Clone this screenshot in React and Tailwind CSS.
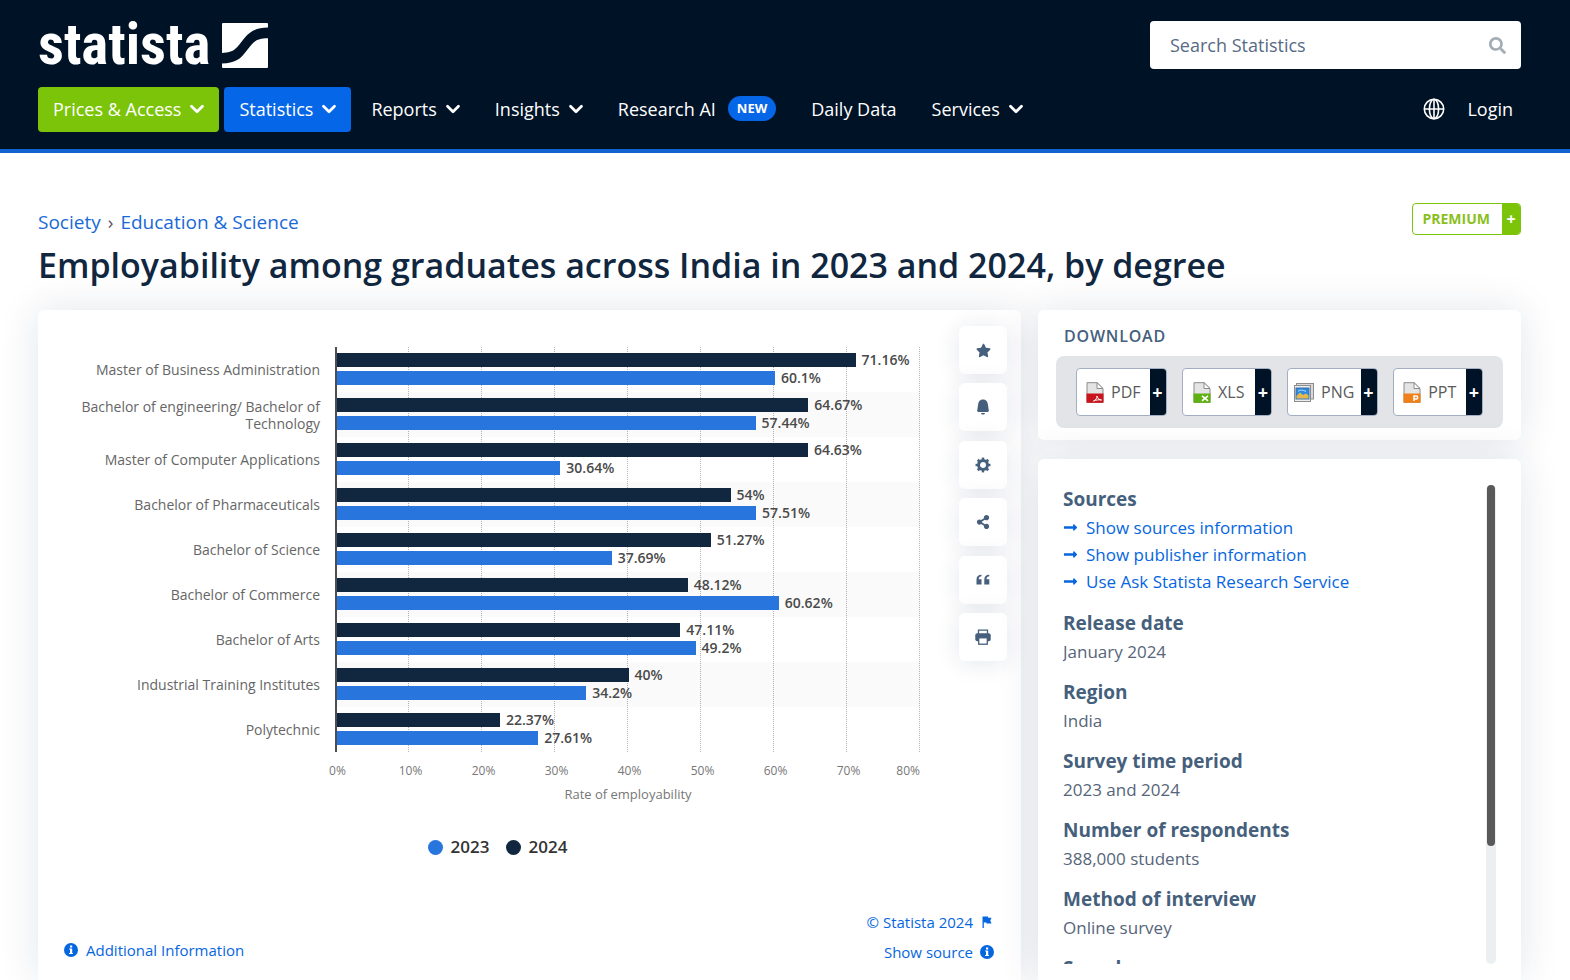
import { useState } from "react";
import { ChevronDown } from "lucide-react";
import { FaLongArrowAltRight, FaSearch, FaShareAlt, FaStar } from "react-icons/fa";

const navItems = [
  { label: "Prices & Access", menu: true, style: "bg-[#7cc40a]" },
  { label: "Statistics", menu: true, style: "bg-[#0666e8]" },
  { label: "Reports", menu: true },
  { label: "Insights", menu: true },
  { label: "Research AI", badge: "NEW" },
  { label: "Daily Data" },
  { label: "Services", menu: true },
];

const chartData = [
  { degree: "Master of Business Administration", y2024: 71.16, y2023: 60.1 },
  { degree: "Bachelor of engineering/ Bachelor of Technology", y2024: 64.67, y2023: 57.44 },
  { degree: "Master of Computer Applications", y2024: 64.63, y2023: 30.64 },
  { degree: "Bachelor of Pharmaceuticals", y2024: 54, y2023: 57.51 },
  { degree: "Bachelor of Science", y2024: 51.27, y2023: 37.69 },
  { degree: "Bachelor of Commerce", y2024: 48.12, y2023: 60.62 },
  { degree: "Bachelor of Arts", y2024: 47.11, y2023: 49.2 },
  { degree: "Industrial Training Institutes", y2024: 40, y2023: 34.2 },
  { degree: "Polytechnic", y2024: 22.37, y2023: 27.61 },
];

const AXIS_MAX = 80;
const ticks = [0, 10, 20, 30, 40, 50, 60, 70];

const sourceLinks = [
  "Show sources information",
  "Show publisher information",
  "Use Ask Statista Research Service",
];

const details = [
  { title: "Release date", value: "January 2024" },
  { title: "Region", value: "India" },
  { title: "Survey time period", value: "2023 and 2024" },
  { title: "Number of respondents", value: "388,000 students" },
  { title: "Method of interview", value: "Online survey" },
  { title: "Sample" },
];

function LogoMark() {
  return (
    <svg width="46" height="45" viewBox="0 0 46 45" aria-hidden="true">
      <path
        fill="#fff"
        d="M1 0H45a1 1 0 0 1 1 1V4.500C35 5 29 7 22.500 15C14.500 25 13 29.500 0 30V1a1 1 0 0 1 1-1Z"
      />
      <path
        fill="#fff"
        d="M46 15.200V44a1 1 0 0 1-1 1H1a1 1 0 0 1-1-1V40.500C13 40 18 36.500 24 28.500C31.500 18.500 34 15.200 46 15.200Z"
      />
    </svg>
  );
}

function GlobeIcon() {
  return (
    <svg width="22" height="22" viewBox="0 0 22 22" fill="none" stroke="#fff" strokeWidth="1.600">
      <circle cx="11" cy="11" r="9.700" />
      <ellipse cx="11" cy="11" rx="4.600" ry="9.700" />
      <path d="M11 1.300V20.700M1.300 11H20.700" />
    </svg>
  );
}

function BellIcon() {
  return (
    <svg width="16" height="16" viewBox="0 0 16 16" fill="currentColor">
      <path d="M8 0.400c3.400 0 4.600 2.300 4.900 5.200l.9 6c.1.9-.3 1.400-1.100 1.400H3.300c-.8 0-1.200-.5-1.100-1.400l.9-6C3.400 2.700 4.600.4 8 .4Z" />
      <path d="M6 14h4c-.2 1-.9 1.600-2 1.600S6.200 15 6 14Z" />
    </svg>
  );
}

function GearIcon() {
  return (
    <svg width="16" height="16" viewBox="0 0 16 16" fill="none" stroke="currentColor">
      <circle cx="8" cy="8" r="4.500" strokeWidth="3" />
      <circle cx="8" cy="8" r="6.400" strokeWidth="2.200" pathLength="16" strokeDasharray="1 1" strokeDashoffset="0.500" />
    </svg>
  );
}

function QuoteIcon() {
  return (
    <svg width="14" height="12" viewBox="0 0 14 12" fill="currentColor">
      <path d="M5.500 0.800v1.400C3.800 2.200 2.700 3.200 2.700 5.200H5.500V10.500H0.500V5.600C0.500 2.500 2.400.8 5.500.8Z" />
      <path d="M13.300 0.800v1.400C11.600 2.200 10.500 3.200 10.500 5.200H13.300V10.500H8.300V5.600C8.300 2.500 10.200.8 13.300.8Z" />
    </svg>
  );
}

function PrintIcon() {
  return (
    <svg width="16" height="16" viewBox="0 0 16 16">
      <path d="M3.500 5V1.200H12.500V5" fill="#fff" stroke="currentColor" strokeWidth="1.300" />
      <rect x="0.300" y="4.300" width="15.400" height="8" rx="2" fill="currentColor" />
      <rect x="3.700" y="8.800" width="8.600" height="6.400" fill="#fff" stroke="currentColor" strokeWidth="1.300" />
    </svg>
  );
}

function InfoIcon() {
  return (
    <svg width="14" height="14" viewBox="0 0 14 14" aria-hidden="true">
      <circle cx="7" cy="7" r="7" fill="#0666e0" />
      <rect x="6" y="2.500" width="2.200" height="2" fill="#fff" />
      <path d="M5.200 5.600H8.200V10H9V11H5V10H6V6.600H5.200Z" fill="#fff" />
    </svg>
  );
}

function FlagIcon() {
  return (
    <svg width="10" height="12" viewBox="0 0 10 12" fill="#0666e0" aria-hidden="true">
      <path d="M0.500 0.500H6V1.800H9.500L8.300 4.600L9.500 7.600H4.500V6.500H1.800V12H0.500Z" />
    </svg>
  );
}

function FileIcon({ color, children }) {
  return (
    <svg width="18" height="21" viewBox="0 0 18 21" aria-hidden="true">
      <path d="M1 .7H11L17 6.500V20.300H1Z" fill="#e4e4e4" stroke="#8c8c8c" />
      <path d="M11 .7V6.500H17Z" fill="#fff" stroke="#8c8c8c" />
      <rect x="0.500" y="11.500" width="17" height="9.300" fill={color} />
      {children}
    </svg>
  );
}

function PictureIcon() {
  return (
    <svg width="20" height="19" viewBox="0 0 20 19" aria-hidden="true">
      <rect x="2.500" y="0.500" width="17" height="15.500" fill="#d9d9d9" stroke="#8c8c8c" />
      <rect x="0.500" y="2.500" width="16" height="16" fill="#eee" stroke="#8c8c8c" />
      <rect x="2" y="5" width="13" height="11" fill="#2f8be0" stroke="#3b6ea8" />
      <path d="M2.500 13L6 9.500L9 12L12 10.500L14.500 12.500V15.500H2.500Z" fill="#e6b84c" />
      <path d="M4 8.500C6 6.500 9 7 12 8.500" stroke="#bfe0fa" fill="none" />
    </svg>
  );
}

const downloads = [
  {
    label: "PDF",
    icon: (
      <FileIcon color="#c8141c">
        <path d="M7.500 19C10 18 11 16 11 14C11.500 16.500 13.500 18 15.500 18C13 17.500 10 18 7.500 19Z" fill="none" stroke="#fff" />
      </FileIcon>
    ),
  },
  {
    label: "XLS",
    icon: (
      <FileIcon color="#5fb012">
        <path d="M9 13.800L15 18.800M15 13.800L9 18.800" stroke="#fff" strokeWidth="1.700" />
      </FileIcon>
    ),
  },
  { label: "PNG", icon: <PictureIcon /> },
  {
    label: "PPT",
    icon: (
      <FileIcon color="#f08019">
        <path d="M11 19V14H13.200A1.500 1.500 0 0 1 13.200 17H11" fill="none" stroke="#fff" strokeWidth="1.500" />
      </FileIcon>
    ),
  },
];

const actions = [
  { name: "Favorite", icon: <FaStar size={15} /> },
  { name: "Notify", icon: <BellIcon /> },
  { name: "Settings", icon: <GearIcon /> },
  { name: "Share", icon: <FaShareAlt size={14} /> },
  { name: "Cite", icon: <QuoteIcon /> },
  { name: "Print", icon: <PrintIcon /> },
];

function Header() {
  const [query, setQuery] = useState("");

  return (
    <header className="border-b-4 border-[#1262d2] bg-[#001226] pt-[21px] pr-[49px] pb-[17px] pl-[38px] text-white">
      <div className="flex h-12 items-center justify-between">
        <a href="#" aria-label="statista" className="flex h-12 items-center gap-3">
          <span className="font-['Liberation_Sans_Narrow','Roboto_Condensed','Liberation_Sans',sans-serif] text-[57px] leading-[48px] font-bold">
            statista
          </span>
          <LogoMark />
        </a>
        <label className="flex h-12 w-[371px] items-center rounded bg-white pr-[15px] pl-5">
          <input
            type="search"
            aria-label="Search Statistics"
            value={query}
            onChange={(e) => setQuery(e.target.value)}
            placeholder="Search Statistics"
            className="h-full min-w-0 flex-1 text-lg text-[#455f7c] outline-none placeholder:text-[#566b84]"
          />
          <FaSearch size={17} className="text-[#a3adb3]" />
        </label>
      </div>

      <div className="mt-[18px] flex items-center justify-between">
        <nav className="flex gap-[5px]">
          {navItems.map((item) => (
            <a
              key={item.label}
              href="#"
              className={`flex h-[45px] items-center rounded px-[15px] pb-0.5 text-lg ${item.style || ""}`}
            >
              {item.label}
              {item.menu && <ChevronDown size={22} strokeWidth={3} className="-mr-1 ml-[5px]" />}
              {item.badge && (
                <span className="ml-3 rounded-full bg-[#0666e8] px-[9px] text-[13px] leading-[25px] font-bold">
                  {item.badge}
                </span>
              )}
            </a>
          ))}
        </nav>
        <div className="flex items-center gap-[22px] pr-2 pb-0.5 text-lg">
          <button type="button" aria-label="Language">
            <GlobeIcon />
          </button>
          <a href="#">Login</a>
        </div>
      </div>
    </header>
  );
}

function Bar({ value, color }) {
  return (
    <div className="flex h-[14px] items-center gap-[6px]">
      <div className={`h-[14px] ${color}`} style={{ width: `${(value / AXIS_MAX) * 100}%` }} />
      <span className="text-sm leading-[14px] font-semibold text-[#4a4a4a]">{value}%</span>
    </div>
  );
}

function Chart() {
  return (
    <div className="min-w-0 flex-1">
      <div className="relative">
        {/* vertical grid lines, one per 10% */}
        <div className="absolute inset-y-0 right-0 left-[261px] grid grid-cols-8">
          {ticks.map((t) => (
            <div key={t} className="border-r border-dotted border-[#b4b4b4]" />
          ))}
        </div>
        {chartData.map((row) => (
          <div key={row.degree} className="group flex h-[45px] items-center">
            <div className="w-[260px] pr-[15px] text-right text-sm leading-[17px] text-[#666]">
              {row.degree}
            </div>
            <div className="relative h-[45px] flex-1 border-l-2 border-[#4a4f55] pt-[6px] group-odd:bg-black/2">
              <div className="flex flex-col gap-1">
                <Bar value={row.y2024} color="bg-[#10273f]" />
                <Bar value={row.y2023} color="bg-[#2876dd]" />
              </div>
            </div>
          </div>
        ))}
      </div>

      <div className="ml-[261px] pt-[9px] text-xs leading-5 text-[#777]">
        <div className="relative grid grid-cols-8">
          {ticks.map((t) => (
            <span key={t} className="-ml-9 w-[75px] text-center">
              {t}%
            </span>
          ))}
          <span className="absolute right-0">80%</span>
        </div>
        <p className="mt-[3px] text-center text-[13px]">Rate of employability</p>
      </div>

      <div className="mt-[31px] flex justify-center gap-4 text-[17px] leading-6 font-semibold text-[#333]">
        <span className="flex items-center gap-2">
          <i className="size-[15px] rounded-full bg-[#2876dd]" />
          2023
        </span>
        <span className="flex items-center gap-2">
          <i className="size-[15px] rounded-full bg-[#10273f]" />
          2024
        </span>
      </div>
    </div>
  );
}

function ChartCard() {
  return (
    <section className="flex min-w-0 flex-1 flex-col rounded-t-md bg-white shadow-[0_0_40px_rgba(10,40,80,0.12)]">
      <div className="flex pr-[14px] pl-[37px]">
        <div className="flex min-w-0 flex-1 pt-[37px] pr-[39px]">
          <Chart />
        </div>
        <div className="mt-4 flex h-[335px] flex-col justify-between">
          {actions.map((a) => (
            <button
              key={a.name}
              type="button"
              aria-label={a.name}
              className="flex size-12 items-center justify-center rounded-md bg-white text-[#455f7c] shadow-[0_2px_24px_rgba(10,40,80,0.11)]"
            >
              {a.icon}
            </button>
          ))}
        </div>
      </div>

      <div className="mt-auto flex items-end justify-between pr-[27px] pb-[13px] pl-[26px] text-[15px] leading-[30px] text-[#0666e0]">
        <a href="#" className="mb-0.5 flex items-center gap-2">
          <InfoIcon />
          Additional Information
        </a>
        <div className="flex flex-col items-end">
          <a href="#" className="flex items-center gap-[7px]">
            © Statista 2024
            <span className="flex w-[14px] justify-center">
              <FlagIcon />
            </span>
          </a>
          <a href="#" className="flex items-center gap-[7px]">
            Show source
            <InfoIcon />
          </a>
        </div>
      </div>
    </section>
  );
}

function DownloadCard() {
  return (
    <section className="rounded-md bg-white px-[18px] py-3 shadow-[0_0_40px_rgba(10,40,80,0.12)]">
      <h2 className="px-2 text-base leading-7 font-semibold tracking-wider text-[#455f7c]">DOWNLOAD</h2>
      <div className="mt-[6px] grid grid-cols-4 gap-[15px] rounded-lg bg-[#e3e4e7] px-5 py-3">
        {downloads.map((d) => (
          <button
            key={d.label}
            type="button"
            className="flex h-12 overflow-hidden rounded border border-[#a3afc0] bg-white text-base text-[#5a5a5a]"
          >
            <span className="flex h-full flex-1 items-center justify-center gap-[7px]">
              {d.icon}
              {d.label}
            </span>
            <span className="flex h-full w-4 shrink-0 items-center justify-center bg-[#001226] text-lg font-bold text-white">
              +
            </span>
          </button>
        ))}
      </div>
    </section>
  );
}

function DetailsCard() {
  return (
    <section className="rounded-t-md bg-white px-[25px] pt-[26px] pb-4 shadow-[0_0_40px_rgba(10,40,80,0.12)]">
      <div className="flex h-[479px] justify-between">
        <div className="h-full flex-1 overflow-hidden text-[17px] leading-[27px] text-[#566579]">
          <h3 className="text-[19px] leading-[28px] font-bold text-[#455f7c]">Sources</h3>
          <ul className="py-px text-[#0666e0]">
            {sourceLinks.map((text) => (
              <li key={text}>
                <a href="#" className="flex items-center gap-2">
                  <FaLongArrowAltRight size={15} />
                  {text}
                </a>
              </li>
            ))}
          </ul>
          {details.map((d) => (
            <div key={d.title} className="mt-3">
              <h3 className="text-[19px] leading-[30px] font-bold text-[#455f7c]">{d.title}</h3>
              {d.value && <p>{d.value}</p>}
            </div>
          ))}
        </div>
        <div className="w-[10px] rounded-full bg-[#eceff1] px-px">
          <div className="h-[361px] rounded-full bg-[#595959]" />
        </div>
      </div>
    </section>
  );
}

export default function App() {
  return (
    <div className="flex min-h-screen flex-col bg-white font-['Open_Sans',sans-serif]">
      <Header />
      <main className="flex flex-1 flex-col overflow-hidden pt-[50px] pr-[49px] pl-[38px]">
        <div className="flex h-8 items-start justify-between">
          <nav aria-label="Breadcrumb" className="flex gap-[7px] pt-1 text-[19px] leading-[30px] text-[#1a69d8]">
            <a href="#">Society</a>
            <span className="text-[#556]">›</span>
            <a href="#">Education &amp; Science</a>
          </nav>
          <a
            href="#"
            className="flex h-8 overflow-hidden rounded border border-[#7cc40a] text-sm leading-[30px] font-bold text-[#8abf1f]"
          >
            <span className="pr-3 pl-[10px]">PREMIUM</span>
            <span className="w-[18px] bg-[#7cc40a] text-center text-base leading-[30px] text-white">+</span>
          </a>
        </div>
        <h1 className="mt-1 text-[34px] leading-[52px] font-semibold text-[#10273f]">
          Employability among graduates across India in 2023 and 2024, by degree
        </h1>

        <div className="mt-[19px] flex flex-1 gap-[17px]">
          <ChartCard />
          <aside className="flex w-[483px] flex-col gap-[19px]">
            <DownloadCard />
            <DetailsCard />
          </aside>
        </div>
      </main>
    </div>
  );
}
